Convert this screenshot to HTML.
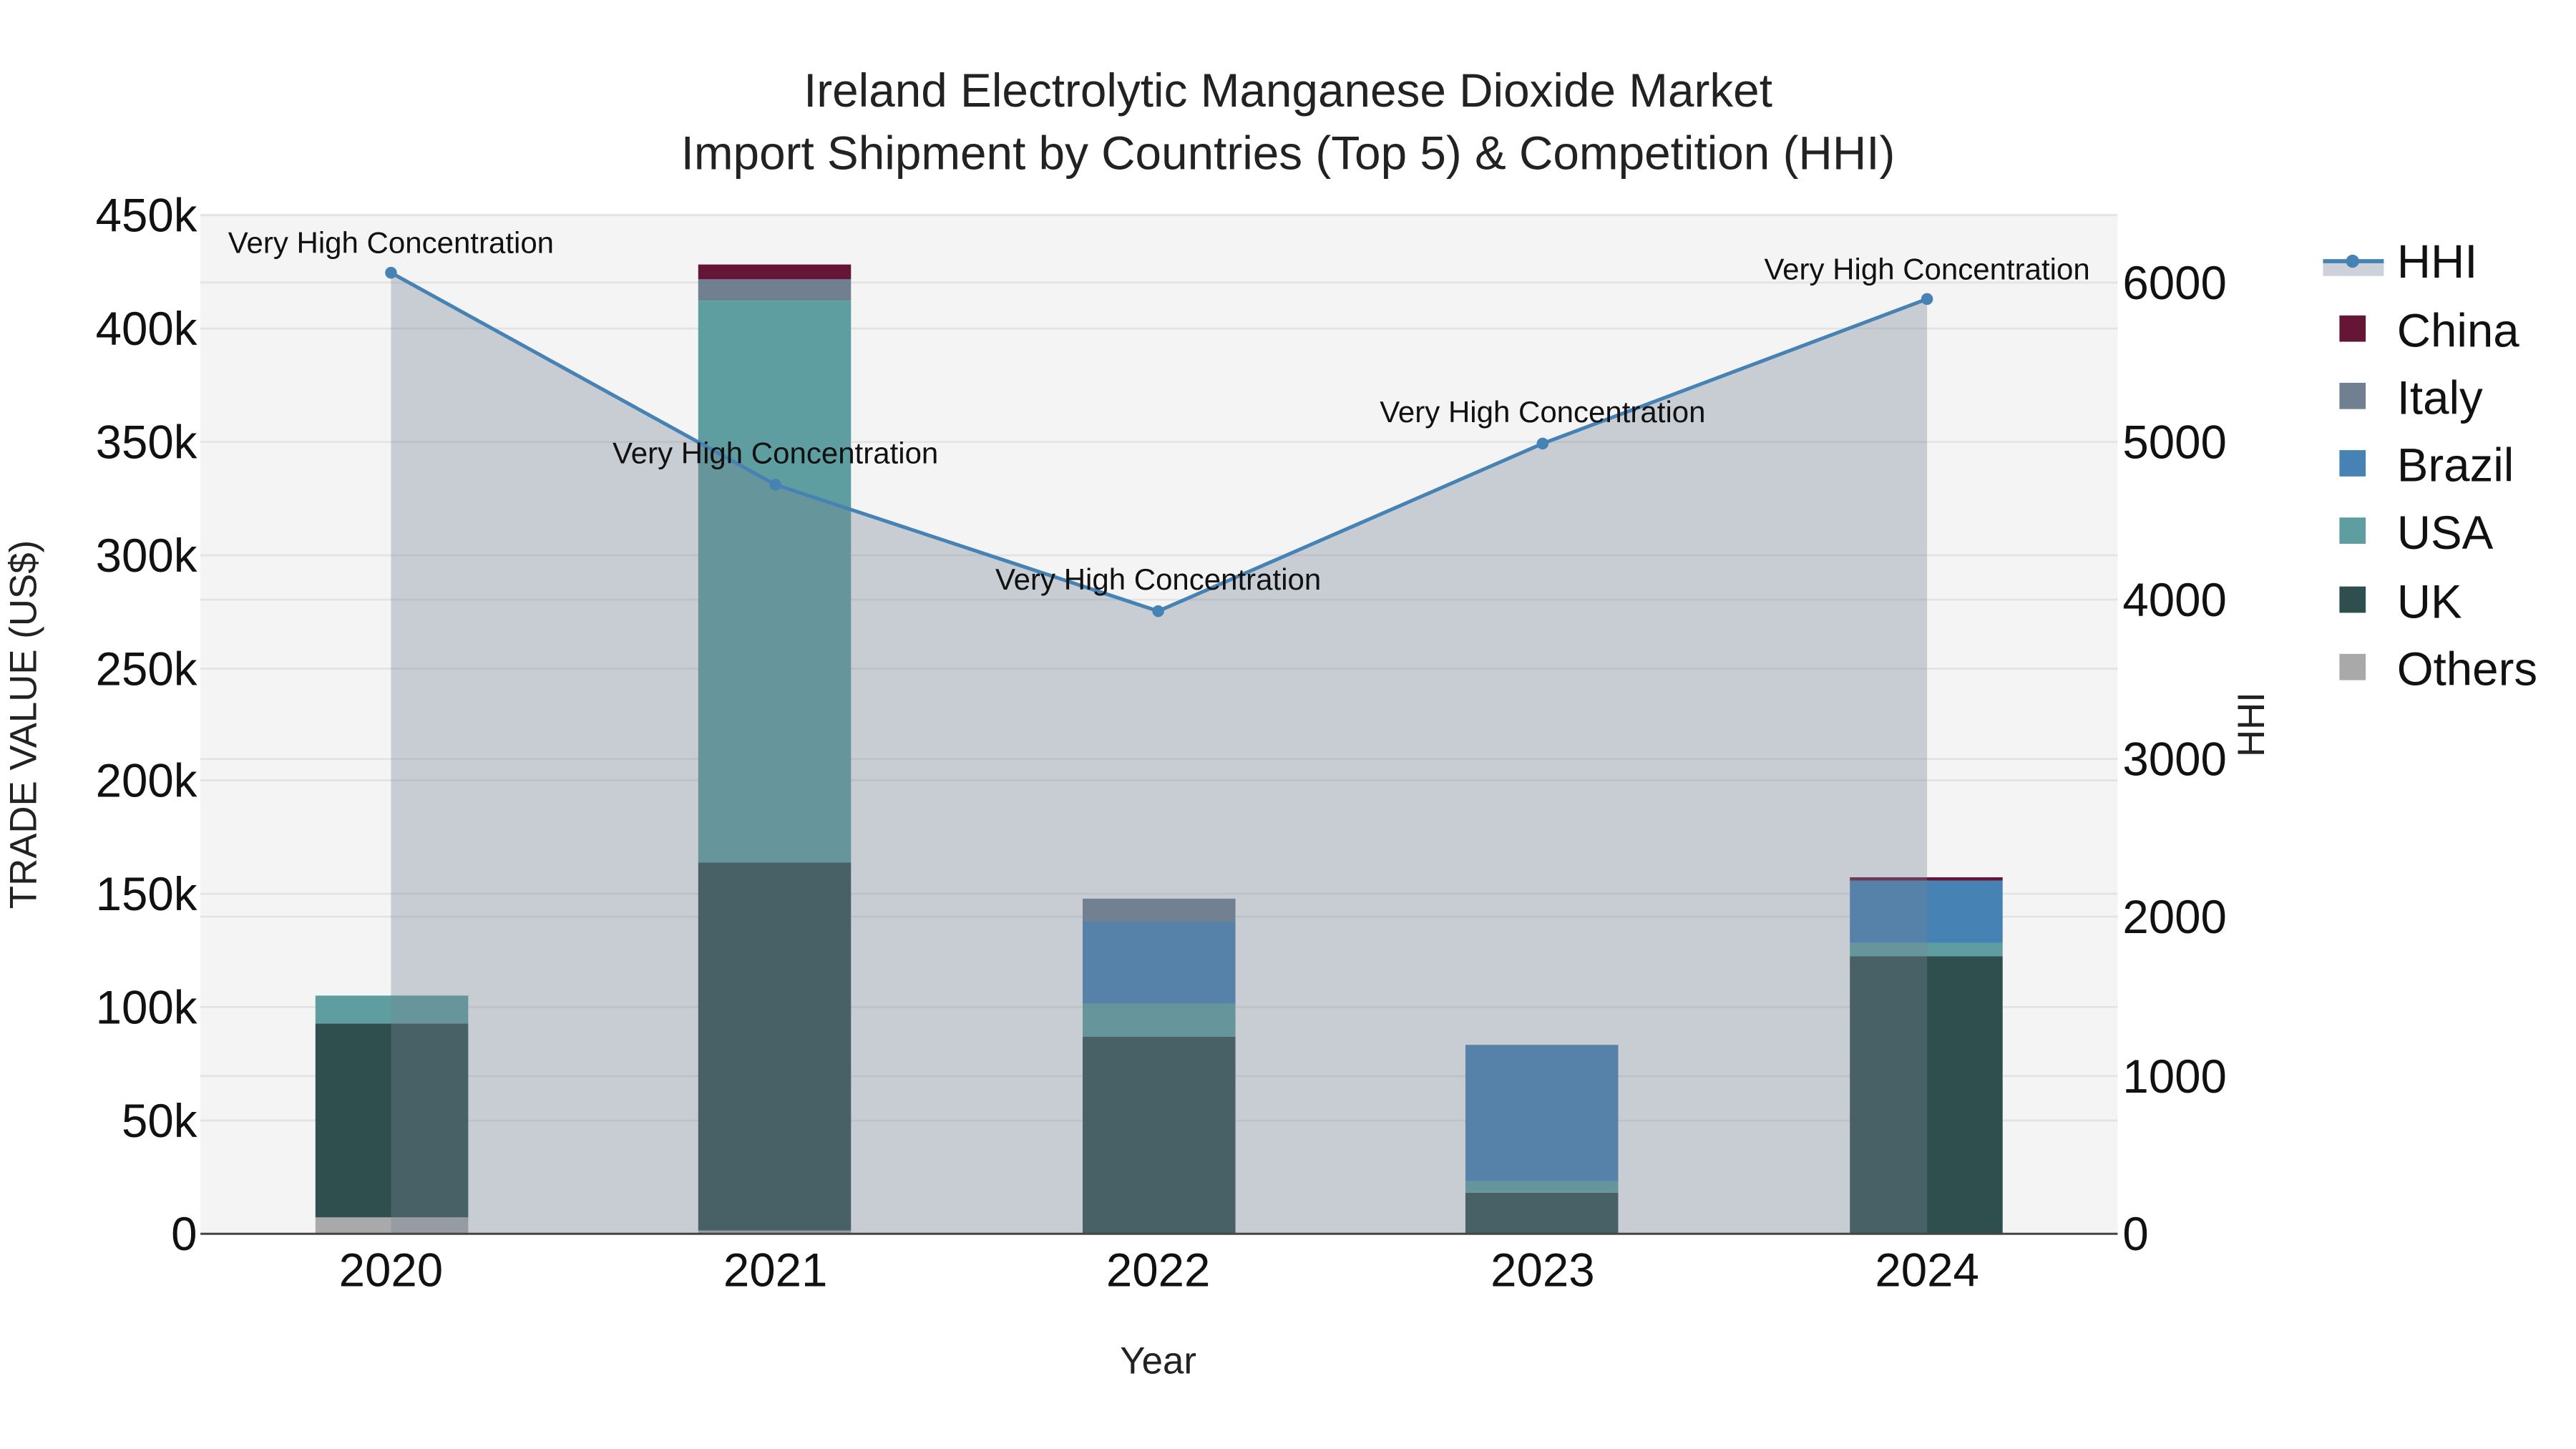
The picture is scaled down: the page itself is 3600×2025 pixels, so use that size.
<!DOCTYPE html>
<html><head><meta charset="utf-8"><style>html,body{margin:0;padding:0;background:#fff}svg{display:block}</style></head>
<body>
<svg width="3600" height="2025" viewBox="0 0 1568 882" preserveAspectRatio="none" xmlns="http://www.w3.org/2000/svg" font-family="Liberation Sans, Arial, sans-serif">
<rect x="0" y="0" width="1568" height="882" fill="#fff"/>
<rect x="122" y="130" width="1167" height="621" fill="#f4f4f4"/>
<g stroke="#e3e3e3" stroke-width="1.2">
<line x1="122" x2="1289" y1="682" y2="682"/><line x1="122" x2="1289" y1="613" y2="613"/><line x1="122" x2="1289" y1="544" y2="544"/><line x1="122" x2="1289" y1="475" y2="475"/><line x1="122" x2="1289" y1="407" y2="407"/><line x1="122" x2="1289" y1="338" y2="338"/><line x1="122" x2="1289" y1="269" y2="269"/><line x1="122" x2="1289" y1="200" y2="200"/><line x1="122" x2="1289" y1="131" y2="131"/>
<line x1="122" x2="1289" y1="655" y2="655"/><line x1="122" x2="1289" y1="558" y2="558"/><line x1="122" x2="1289" y1="462" y2="462"/><line x1="122" x2="1289" y1="365" y2="365"/><line x1="122" x2="1289" y1="172" y2="172"/>
</g>
<g>
<rect x="192" y="741" width="93" height="10" fill="#a9a9a9"/>
<rect x="192" y="623" width="93" height="118" fill="#2f4f4f"/>
<rect x="192" y="606" width="93" height="17" fill="#5f9ea0"/>

<rect x="425" y="749" width="93" height="2" fill="#a9a9a9"/>
<rect x="425" y="525" width="93" height="224" fill="#2f4f4f"/>
<rect x="425" y="183" width="93" height="342" fill="#5f9ea0"/>
<rect x="425" y="170" width="93" height="13" fill="#708090"/>
<rect x="425" y="161" width="93" height="9" fill="#651535"/>

<rect x="659" y="631" width="93" height="120" fill="#2f4f4f"/>
<rect x="659" y="611" width="93" height="20" fill="#5f9ea0"/>
<rect x="659" y="561" width="93" height="50" fill="#4682b4"/>
<rect x="659" y="547" width="93" height="14" fill="#708090"/>

<rect x="892" y="726" width="93" height="25" fill="#2f4f4f"/>
<rect x="892" y="719" width="93" height="7" fill="#5f9ea0"/>
<rect x="892" y="636" width="93" height="83" fill="#4682b4"/>

<rect x="1126" y="582" width="93" height="169" fill="#2f4f4f"/>
<rect x="1126" y="574" width="93" height="8" fill="#5f9ea0"/>
<rect x="1126" y="536" width="93" height="38" fill="#4682b4"/>
<rect x="1126" y="534" width="93" height="2" fill="#651535"/>
</g>
<polygon points="238,751 238,166 472,295 705,372 939,270 1173,182 1173,751" fill="rgb(118,132,150)" fill-opacity="0.35"/>
<polyline points="238,166 472,295 705,372 939,270 1173,182" fill="none" stroke="#4682b4" stroke-width="2.2"/>
<g fill="#4682b4"><circle cx="238" cy="166" r="3.6"/><circle cx="472" cy="295" r="3.6"/><circle cx="705" cy="372" r="3.6"/><circle cx="939" cy="270" r="3.6"/><circle cx="1173" cy="182" r="3.6"/></g>
<line x1="122" x2="1289" y1="751" y2="751" stroke="#444" stroke-width="1.3"/>
<g font-size="18.3" fill="#111" text-anchor="middle">
<text x="238" y="154">Very High Concentration</text>
<text x="472" y="282">Very High Concentration</text>
<text x="705" y="359">Very High Concentration</text>
<text x="939" y="257">Very High Concentration</text>
<text x="1173" y="170">Very High Concentration</text>
</g>
<g fill="#222" font-size="28.6" text-anchor="middle">
<text x="784" y="65">Ireland Electrolytic Manganese Dioxide Market</text>
<text x="784" y="103">Import Shipment by Countries (Top 5) &amp; Competition (HHI)</text>
</g>
<g fill="#111" font-size="28.5" text-anchor="end">
<text x="120" y="761">0</text><text x="120" y="692">50k</text><text x="120" y="623">100k</text><text x="120" y="554">150k</text><text x="120" y="485">200k</text><text x="120" y="417">250k</text><text x="120" y="348">300k</text><text x="120" y="279">350k</text><text x="120" y="210">400k</text><text x="120" y="141">450k</text>
</g>
<g fill="#111" font-size="28.5">
<text x="1292" y="761">0</text><text x="1292" y="665">1000</text><text x="1292" y="568">2000</text><text x="1292" y="472">3000</text><text x="1292" y="375">4000</text><text x="1292" y="279">5000</text><text x="1292" y="182">6000</text>
</g>
<g fill="#111" font-size="28.5" text-anchor="middle">
<text x="238" y="783">2020</text><text x="472" y="783">2021</text><text x="705" y="783">2022</text><text x="939" y="783">2023</text><text x="1173" y="783">2024</text>
</g>
<text x="705" y="836" font-size="23" fill="#222" text-anchor="middle">Year</text>
<text transform="translate(22,441) rotate(-90)" font-size="23" fill="#222" text-anchor="middle">TRADE VALUE (US$)</text>
<text transform="translate(1378,441) rotate(-90)" font-size="23" fill="#222" text-anchor="middle">HHI</text>
<rect x="1414" y="159" width="37" height="9" fill="#cdd2da"/>
<line x1="1414" x2="1451" y1="159" y2="159" stroke="#4682b4" stroke-width="2.5"/>
<circle cx="1432" cy="159" r="4" fill="#4682b4"/>
<rect x="1424" y="192" width="16" height="16" fill="#651535"/>
<rect x="1424" y="233" width="16" height="16" fill="#708090"/>
<rect x="1424" y="274" width="16" height="16" fill="#4682b4"/>
<rect x="1424" y="315" width="16" height="16" fill="#5f9ea0"/>
<rect x="1424" y="357" width="16" height="16" fill="#2f4f4f"/>
<rect x="1424" y="398" width="16" height="16" fill="#a9a9a9"/>
<g fill="#111" font-size="28.5">
<text x="1459" y="169">HHI</text><text x="1459" y="211">China</text><text x="1459" y="252">Italy</text><text x="1459" y="293">Brazil</text><text x="1459" y="334">USA</text><text x="1459" y="376">UK</text><text x="1459" y="417">Others</text>
</g>
</svg>
</body></html>
